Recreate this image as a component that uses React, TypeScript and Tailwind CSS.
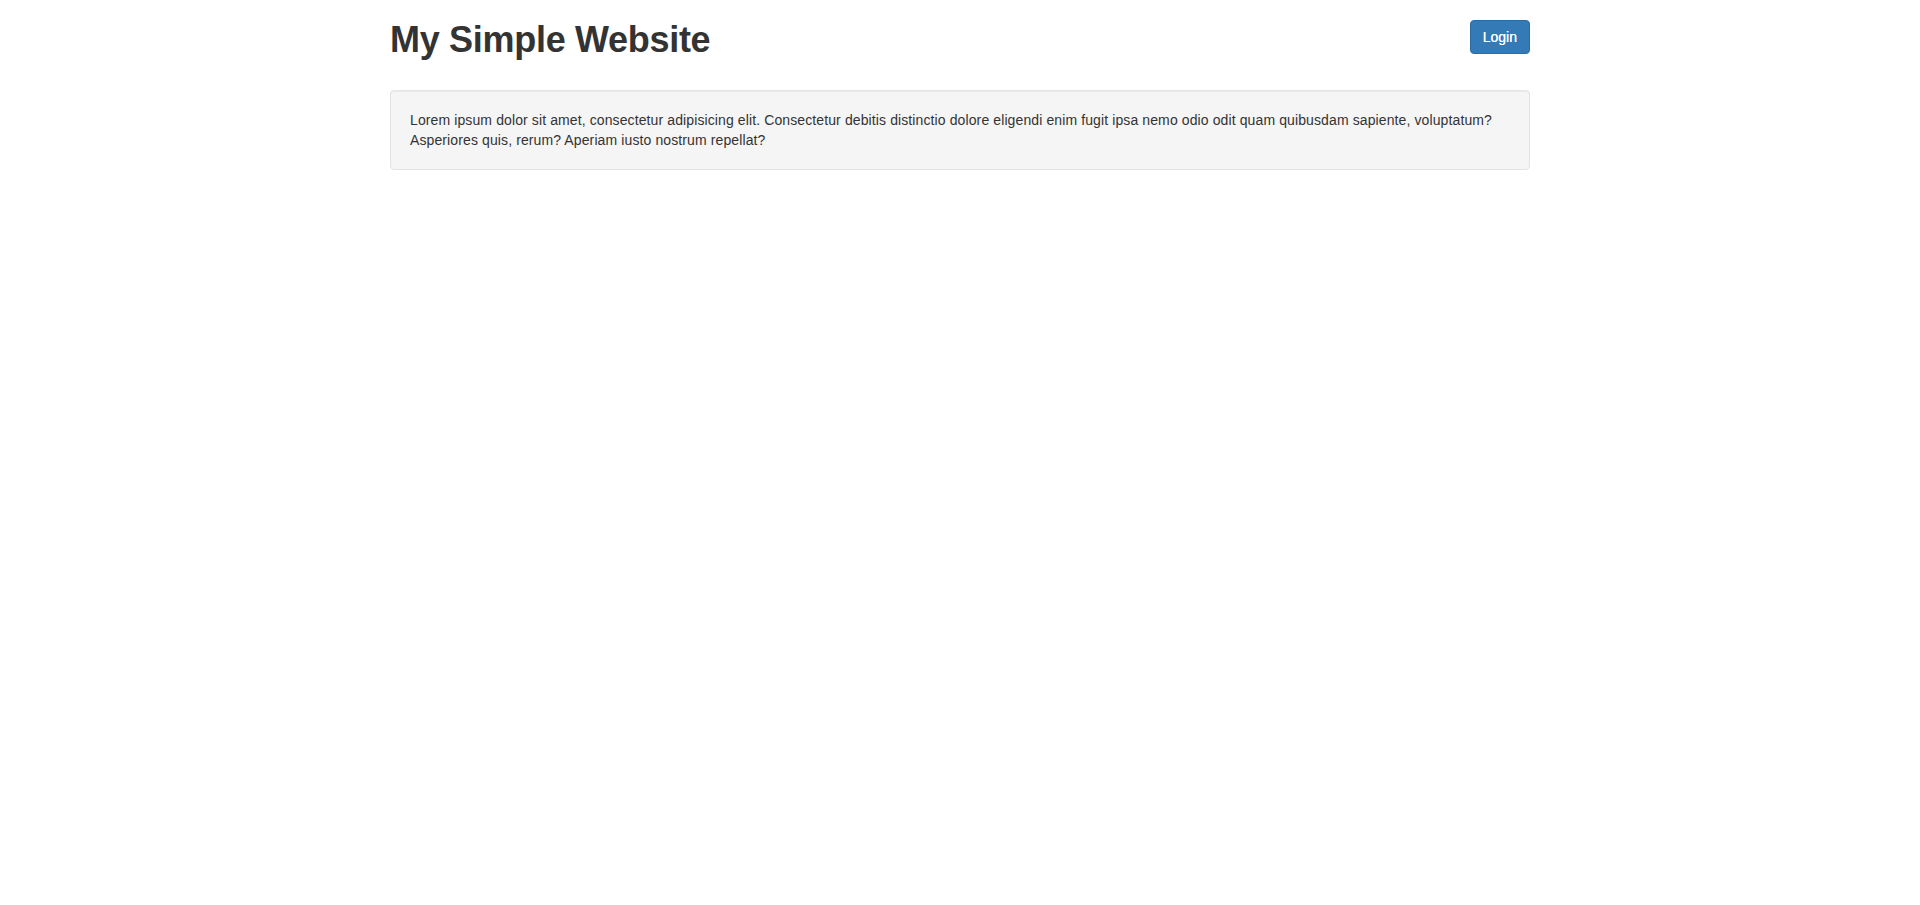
import React from "react";

export default function App() {
  return (
    <div className="min-h-[905px] bg-white text-[#333333] [font-family:'Liberation_Sans',Arial,sans-serif]">
      <div className="mx-auto w-[1170px] px-[15px]">
        <div className="flex items-start justify-between">
          <h1 className="mt-[20px] mb-[10px] text-[36px] font-bold leading-[1.1] tracking-[-0.3px] text-[#333333]">
            My Simple Website
          </h1>
          <button className="mt-[20px] h-[34px] rounded-[4px] border border-[#2e6da4] bg-[#337ab7] px-[12px] text-[14px] font-normal leading-[20px] text-white [text-shadow:0_0_0.4px_#ffffff]">
            Login
          </button>
        </div>
        <div className="mt-[20px] min-h-[20px] rounded-[4px] border border-[#e3e3e3] bg-[#f5f5f5] p-[19px] text-[14px] leading-[20px] tracking-[0.11px] shadow-[inset_0_1px_1px_rgba(0,0,0,0.05)]">
          Lorem ipsum dolor sit amet, consectetur adipisicing elit. Consectetur debitis distinctio dolore eligendi enim fugit ipsa nemo odio odit quam quibusdam sapiente, voluptatum? Asperiores quis, rerum? Aperiam iusto nostrum repellat?
        </div>
      </div>
    </div>
  );
}
